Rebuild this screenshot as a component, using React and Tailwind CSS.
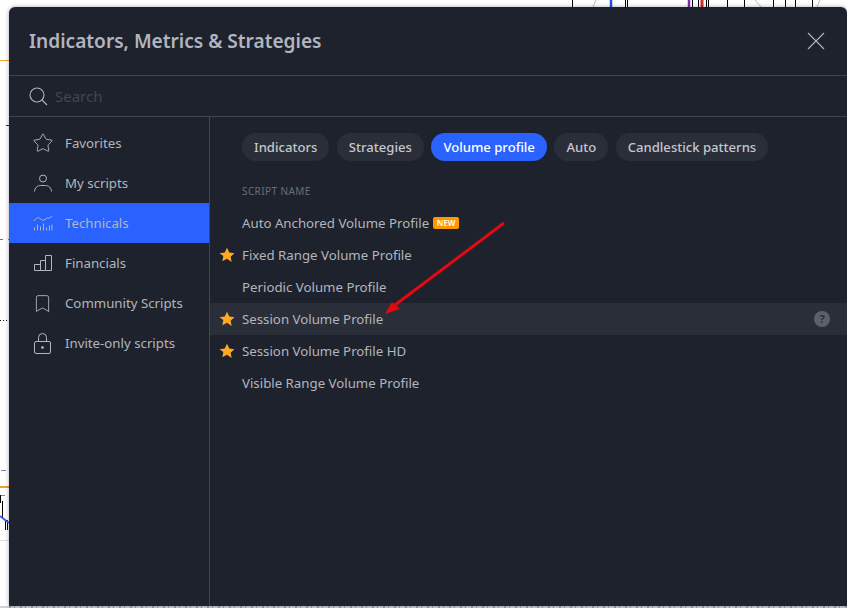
import { Star, Bookmark } from 'lucide-react'

const FONT = "font-['Noto_Sans',sans-serif]"

const IcClose = () => (
  <svg width="18" height="18" viewBox="0 0 18 18" fill="none" stroke="currentColor" strokeWidth="1.1">
    <path d="M1 1l16 16M17 1L1 17" />
  </svg>
)

const IcSearch = () => (
  <svg width="19" height="19" viewBox="0 0 19 19" fill="none" stroke="currentColor" strokeWidth="1.1">
    <circle cx="8" cy="8" r="7" />
    <path d="M13 13l5 5" />
  </svg>
)

const IcUser = () => (
  <svg width="18" height="18" viewBox="0 0 18 18" fill="none" stroke="currentColor" strokeWidth="1">
    <circle cx="9" cy="4.500" r="3.500" />
    <path d="M.5 17.500c0-3.500 3-6 6-6h5c3 0 6 2.500 6 6" />
  </svg>
)

const IcTechnicals = () => (
  <svg width="20" height="16" viewBox="0 0 20 16" fill="none" stroke="currentColor" strokeWidth="1">
    <path d="M1 6 C3 3 5 2 7 3.500 S10 6 12 4.500 S15 2 16 3.500 L19 1" />
    <path d="M1.500 15.500v-3M4.500 15.500v-6M7.500 15.500v-4M10.500 15.500v-7M13.500 15.500v-3M16.500 15.500v-5M19 15.500v-6" />
  </svg>
)

const IcFinancials = () => (
  <svg width="18" height="16" viewBox="0 0 18 16" fill="none" stroke="currentColor" strokeWidth="1">
    <path d="M.5 9.500h6v6h-6zM6.500 5.500h5v10h-5zM11.500 .5h6v15h-6z" />
  </svg>
)

const IcLock = () => (
  <svg width="17" height="21" viewBox="0 0 17 21" fill="none" stroke="currentColor" strokeWidth="1">
    <rect x=".5" y="8.500" width="16" height="12" rx="1.500" />
    <path d="M4.500 8.500V4.500a4 4 0 0 1 8 0v4" />
    <circle cx="8.500" cy="14.500" r="1" fill="currentColor" />
  </svg>
)

const NAV = [
  { label: 'Favorites', icon: <Star size={22} strokeWidth={1} /> },
  { label: 'My scripts', icon: <IcUser /> },
  { label: 'Technicals', icon: <IcTechnicals />, active: true },
  { label: 'Financials', icon: <IcFinancials /> },
  { label: 'Community Scripts', icon: <Bookmark size={21} strokeWidth={1} /> },
  { label: 'Invite-only scripts', icon: <IcLock /> },
]

const TABS = [
  { label: 'Indicators' },
  { label: 'Strategies' },
  { label: 'Volume profile', active: true },
  { label: 'Auto' },
  { label: 'Candlestick patterns' },
]

const SCRIPTS = [
  { name: 'Auto Anchored Volume Profile', isNew: true },
  { name: 'Fixed Range Volume Profile', fav: true },
  { name: 'Periodic Volume Profile' },
  { name: 'Session Volume Profile', fav: true, hover: true },
  { name: 'Session Volume Profile HD', fav: true },
  { name: 'Visible Range Volume Profile' },
]

function FavStar() {
  return (
    <svg width="16" height="16" viewBox="0 0 24 24" fill="#ffa726" className="absolute left-[9px] top-1/2 -translate-y-1/2">
      <path d="M12 1l3.400 7.200 7.800 1-5.700 5.400 1.500 7.800L12 17.600l-7 3.800 1.500-7.800L.8 9.200l7.800-1z" />
    </svg>
  )
}

// the chart that shows round the dialog's edges
function ChartBehind() {
  return (
    <svg className="absolute inset-0" width="847" height="608" viewBox="0 0 847 608" fill="none">
      <path d="M0 60.500h9" stroke="#f0a030" />
      <path d="M6 125.500h3" stroke="#333" />
      <path d="M0 239.500h3M8 239.500h1" stroke="#6a70c8" />
      <path d="M0 320.500h8" stroke="#000" strokeDasharray="1 2" />
      <path d="M1 470.500h5M0 495.500h5" stroke="#8a80b8" />
      <path d="M0 487h9" stroke="#f0a030" strokeWidth="2" />
      <path d="M.5 495v8M2.500 501v16M5.500 520v10M7.500 520v10" stroke="#000" />
      <path d="M0 516l9 7" stroke="#3a60d0" strokeWidth="2" />
      <path d="M0 540.500h9" stroke="#ddd" />
      <path d="M572.500 0v7M625.500 0v7M627.500 0v7M692.500 0v7M698.500 0v7M706.500 0v7M708.500 0v7M727.500 0v7M744.500 0v7M773.500 0v7M785.500 0v7M795.500 0v7M812.500 0v7" stroke="#000" />
      <path d="M596 0l-3 7M755 0l6 7M820 0l-3 7" stroke="#bbb" />
      <path d="M611 0v7" stroke="#2050e0" strokeWidth="2.500" />
      <path d="M689 0v7" stroke="#8030a0" strokeWidth="2.500" />
      <path d="M702 0v7" stroke="#d03030" strokeWidth="3" />
      <path d="M0 607h847" stroke="#c8d4d8" strokeWidth="2" />
      <path d="M9 607h838" stroke="#9aa0a8" strokeWidth="2" strokeDasharray="2 3 1 5" />
    </svg>
  )
}

export default function App() {
  return (
    <div className={`relative h-[608px] w-[847px] overflow-hidden bg-white pl-[9px] pt-[7px] ${FONT}`}>
      <ChartBehind />

      <div className="relative flex h-[599px] w-[838px] flex-col rounded-t-[6px] bg-[#1e222d] shadow-[0_0_4px_rgba(0,0,0,0.35)]">
        <header className="flex h-[69px] shrink-0 items-center justify-between border-b border-[#434651] pl-[20px] pr-[22px]">
          <h1 className="text-[19.1px] font-semibold text-[#b2b5be]">Indicators, Metrics &amp; Strategies</h1>
          <span className="text-[#b2b5be]">
            <IcClose />
          </span>
        </header>

        <div className="flex h-[41px] shrink-0 items-center gap-[7px] border-b border-[#434651] pl-[20px]">
          <span className="text-[#b2b5be]">
            <IcSearch />
          </span>
          <span className="text-[15px] text-[#434651]">Search</span>
        </div>

        <div className="flex min-h-0 flex-1">
          <nav className="w-[201px] shrink-0 border-r border-[#434651] pt-[6px]">
            {NAV.map((n) => (
              <div
                key={n.label}
                className={`flex h-[40px] items-center text-[13.25px] text-[#b2b5be] ${n.active ? 'bg-[#2962ff]' : ''}`}
              >
                <span className="flex w-[56px] shrink-0 justify-center pl-[11px]">{n.icon}</span>
                <span className="pt-[2px]">{n.label}</span>
              </div>
            ))}
          </nav>

          <main className="min-w-0 flex-1">
            <div className="flex gap-[7.5px] pl-[32px] pt-[16px]">
              {TABS.map((t) => (
                <span
                  key={t.label}
                  className={`flex h-[28px] items-center rounded-full px-[12px] pt-[2px] text-[13.1px] font-medium ${
                    t.active ? 'bg-[#2962ff] text-white' : 'bg-[#2a2e39] text-[#c4c7cf]'
                  }`}
                >
                  {t.label}
                </span>
              ))}
            </div>

            <div className="pl-[32px] pt-[20px] text-[10px] uppercase leading-[20px] tracking-[0.4px] text-[#6a6d78]">
              Script name
            </div>

            <div className="mt-[6px]">
              {SCRIPTS.map((s) => (
                <div
                  key={s.name}
                  className={`relative flex h-[32px] items-center pl-[32px] text-[13.25px] text-[#b2b5be] ${
                    s.hover ? 'bg-[#2a2e39]' : ''
                  }`}
                >
                  {s.fav && <FavStar />}
                  <span className="pt-[2px]">{s.name}</span>
                  {s.isNew && (
                    <span className="ml-[4px] flex h-[12px] w-[26px] items-center justify-center rounded-[2px] bg-[#ff9800] text-[8px] font-bold leading-none text-[#fff3dc]">
                      NEW
                    </span>
                  )}
                  {s.hover && (
                    <span className="absolute right-[17px] top-1/2 flex h-[16px] w-[16px] -translate-y-1/2 items-center justify-center rounded-full bg-[#5d606b] text-[11px] font-bold text-[#2a2e39]">
                      ?
                    </span>
                  )}
                </div>
              ))}
            </div>
          </main>
        </div>
      </div>

      {/* red annotation arrow */}
      <svg className="absolute left-[380px] top-[215px]" width="130" height="105" viewBox="0 0 130 105" fill="none">
        <path d="M124 8 L15 90" stroke="#e00a10" strokeWidth="3" />
        <path d="M5 99 L12 87 L20 94 Z" fill="#e00a10" />
      </svg>
    </div>
  )
}
